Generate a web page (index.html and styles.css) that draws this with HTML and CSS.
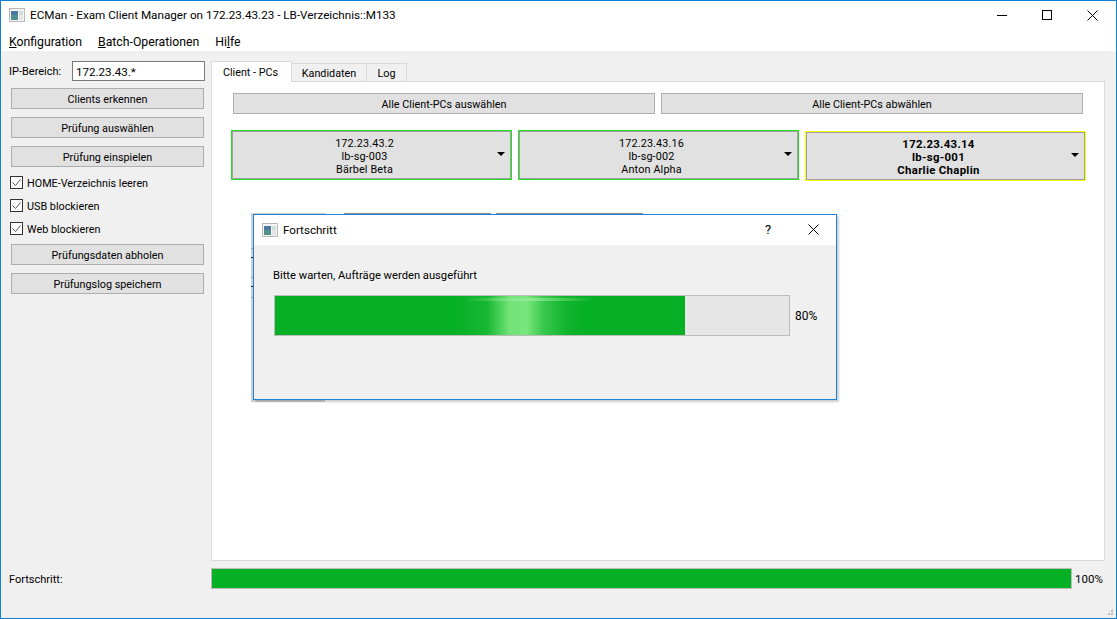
FILE: index.html
```html
<!DOCTYPE html>
<html>
<head>
    <meta charset="utf-8">
    <title>ECMan - Exam Client Manager</title>
    <link rel="stylesheet" href="styles.css">
</head>

<body>
<div class="window">
    <div class="titlebar">
        <svg class="app-icon" width="16" height="14" viewBox="0 0 16 14">
            <rect x="0.5" y="0.5" width="15" height="13" fill="#f4f4f4" stroke="#b9b9b9"/>
            <rect x="2" y="3" width="7" height="9" fill="#4f8f8c"/>
            <rect x="2" y="3" width="7" height="4" fill="#4a78a0"/>
            <rect x="10" y="3" width="4" height="4" fill="#cfe0d6"/>
            <rect x="10" y="7" width="4" height="5" fill="#e4e4e4"/>
        </svg>
        <span class="title-text">ECMan - Exam Client Manager on 172.23.43.23 - LB-Verzeichnis::M133</span>
        <div class="window-buttons">
            <svg width="11" height="11" viewBox="0 0 11 11"><path d="M0 5.5h10" stroke="#000" fill="none"/></svg>
            <svg width="11" height="11" viewBox="0 0 11 11"><rect x="0.5" y="0.5" width="9" height="9" stroke="#000" fill="none"/></svg>
            <svg width="11" height="11" viewBox="0 0 11 11"><path d="M0.5 0.5l10 10M10.5 0.5l-10 10" stroke="#000" fill="none"/></svg>
        </div>
    </div>

    <div class="menubar">
        <span><u>K</u>onfiguration</span>
        <span><u>B</u>atch-Operationen</span>
        <span>Hi<u>l</u>fe</span>
    </div>

    <div class="main">
        <div class="sidebar">
            <div class="ip-row">
                <label>IP-Bereich:</label>
                <div class="ip-input">172.23.43.*</div>
            </div>
            <button class="btn side-btn">Clients erkennen</button>
            <button class="btn side-btn">Prüfung auswählen</button>
            <button class="btn side-btn">Prüfung einspielen</button>
            <div class="checks">
                <div class="check">
                    <svg width="13" height="13" viewBox="0 0 13 13"><rect x="0.5" y="0.5" width="12" height="12" fill="#fff" stroke="#333"/><path d="M2.5 6.5l3 3 5-6" stroke="#555" fill="none"/></svg>
                    HOME-Verzeichnis leeren
                </div>
                <div class="check">
                    <svg width="13" height="13" viewBox="0 0 13 13"><rect x="0.5" y="0.5" width="12" height="12" fill="#fff" stroke="#333"/><path d="M2.5 6.5l3 3 5-6" stroke="#555" fill="none"/></svg>
                    USB blockieren
                </div>
                <div class="check">
                    <svg width="13" height="13" viewBox="0 0 13 13"><rect x="0.5" y="0.5" width="12" height="12" fill="#fff" stroke="#333"/><path d="M2.5 6.5l3 3 5-6" stroke="#555" fill="none"/></svg>
                    Web blockieren
                </div>
            </div>
            <button class="btn side-btn">Prüfungsdaten abholen</button>
            <button class="btn side-btn">Prüfungslog speichern</button>
        </div>

        <div class="tabs">
            <div class="tab-bar">
                <div class="tab active">Client - PCs</div>
                <div class="tab tab-kand">Kandidaten</div>
                <div class="tab tab-log">Log</div>
            </div>
            <div class="tab-pane">
                <div class="select-row">
                    <button class="btn">Alle Client-PCs auswählen</button>
                    <button class="btn">Alle Client-PCs abwählen</button>
                </div>
                <div class="client-row">
                    <div class="client online">
                        <div>172.23.43.2<br>lb-sg-003<br>Bärbel Beta</div>
                        <i class="arrow"></i>
                    </div>
                    <div class="client online">
                        <div>172.23.43.16<br>lb-sg-002<br>Anton Alpha</div>
                        <i class="arrow"></i>
                    </div>
                    <div class="client busy">
                        <div>172.23.43.14<br>lb-sg-001<br>Charlie Chaplin</div>
                        <i class="arrow"></i>
                    </div>
                </div>
            </div>
        </div>
    </div>

    <div class="statusrow">
        <span class="status-label">Fortschritt:</span>
        <div class="bar status-bar"><div class="bar-fill full"></div></div>
        <span class="status-pct">100%</span>
    </div>
    <div class="grip"></div>

    <!-- stuff behind the dialog that peeks out around its edges -->
    <div class="peek peek-a"></div>
    <div class="peek peek-b"></div>
    <div class="peek-table"></div>

    <div class="dialog">
        <div class="dialog-title">
            <svg class="dialog-icon" width="16" height="14" viewBox="0 0 16 14">
                <rect x="0.5" y="0.5" width="15" height="13" fill="#f4f4f4" stroke="#b9b9b9"/>
                <rect x="2" y="3" width="7" height="9" fill="#4f8f8c"/>
                <rect x="2" y="3" width="7" height="4" fill="#4a78a0"/>
                <rect x="10" y="3" width="4" height="4" fill="#cfe0d6"/>
                <rect x="10" y="7" width="4" height="5" fill="#e4e4e4"/>
            </svg>
            <span>Fortschritt</span>
            <span class="dialog-help">?</span>
            <svg class="dialog-close" width="11" height="11" viewBox="0 0 11 11"><path d="M0.5 0.5l10 10M10.5 0.5l-10 10" stroke="#000" fill="none"/></svg>
        </div>
        <div class="dialog-body">
            <div class="dialog-msg">Bitte warten, Aufträge werden ausgeführt</div>
            <div class="dialog-progress">
                <div class="bar dialog-bar">
                    <div class="bar-fill" style="width: 79.8%">
                        <div class="shine"></div>
                        <div class="shine-top"></div>
                    </div>
                </div>
                <span class="dialog-pct">80%</span>
            </div>
        </div>
    </div>
</div>
</body>
</html>
```

FILE: styles.css
```css
html, body {
    margin: 0;
    padding: 0;
    overflow: hidden;
}

body {
    font-family: Roboto, "Open Sans", sans-serif;
    font-size: 10.8px;
    color: #000;
}

.window {
    position: relative;
    box-sizing: border-box;
    width: 1117px;
    height: 619px;
    border: 1px solid #0f7fd8;
    background: #f0f0f0;
    display: flex;
    flex-direction: column;
}

/* title + menu */
.titlebar {
    height: 29px;
    background: #fff;
    display: flex;
    align-items: center;
    padding-left: 8px;
    padding-bottom: 1px;
    box-sizing: border-box;
}
.app-icon {
    margin-right: 5px;
}
.title-text {
    flex: 1;
    font-size: 11.7px;
}
.window-buttons {
    display: flex;
    gap: 34px;
    padding-right: 18px;
}
.menubar {
    height: 21px;
    background: #fff;
    display: flex;
    gap: 16px;
    padding-left: 8px;
    font-size: 12.25px;
    line-height: 24px;
}

/* main area */
.main {
    flex: 1;
    display: flex;
    min-height: 0;
}
.sidebar {
    width: 210px;
    flex: none;
    box-sizing: border-box;
    padding: 10px 0 0 10px;
    display: flex;
    flex-direction: column;
}
.ip-row {
    display: flex;
    margin-left: -2px;
    height: 20px;
    margin-bottom: 7px;
    font-size: 11px;
    line-height: 22px;
}
.ip-row label {
    width: 63px;
}
.ip-input {
    box-sizing: border-box;
    width: 133px;
    height: 20px;
    border: 1px solid #7a7a7a;
    background: #fff;
    padding-left: 3px;
    line-height: 20px;
    font-size: 11.6px;
}
.btn {
    box-sizing: border-box;
    height: 21px;
    border: 1px solid #adadad;
    background: #e1e1e1;
    font-family: inherit;
    font-size: 10.8px;
    color: #000;
    padding: 2px 0 0;
}
.side-btn {
    width: 193px;
    margin-bottom: 8px;
}
.checks {
    margin-left: -1px;
    margin-top: -2px;
    margin-bottom: 7px;
    display: flex;
    flex-direction: column;
    gap: 5px;
}
.check {
    height: 18px;
    box-sizing: border-box;
    padding-top: 2px;
    display: flex;
    align-items: center;
    gap: 4px;
}
.check svg {
    margin-top: -2px;
}

/* tabs */
.tabs {
    flex: 1;
    display: flex;
    flex-direction: column;
    margin-right: 11px;
    padding-top: 10px;
}
.tab-bar {
    display: flex;
    align-items: flex-end;
    height: 20px;
}
.tab {
    box-sizing: border-box;
    height: 18px;
    border: 1px solid #d9d9d9;
    border-left: 0;
    border-bottom: 0;
    text-align: center;
    line-height: 19px;
}
.tab.active {
    width: 81px;
    height: 21px;
    margin-bottom: -1px;
    padding-right: 2px;
    background: #fff;
    border-left: 1px solid #d9d9d9;
    line-height: 22px;
    position: relative;
}
.tab-kand {
    width: 75px;
}
.tab-log {
    width: 40px;
}
.tab-pane {
    flex: 1;
    background: #fff;
    border: 1px solid #d9d9d9;
    padding: 11px 21px 0 19px;
}
.select-row {
    display: flex;
    gap: 6px;
    padding-left: 2px;
}
.select-row .btn {
    flex: 1;
}
.client-row {
    display: flex;
    align-items: flex-start;
    gap: 6px;
    margin-top: 16px;
    margin-right: -4px;
}
.client {
    box-sizing: border-box;
    position: relative;
    flex: none;
    width: 281px;
    height: 50px;
    background: #e1e1e1;
    text-align: center;
    padding: 6px 14px 0 0;
    line-height: 13px;
    letter-spacing: 0.15px;
}
.client.online {
    border: 1px solid #22e022;
    box-shadow: inset 0 0 0 1px #a0a0a0;
}
.client.busy {
    margin-top: 1px;
    border: 1px solid #ffff00;
    box-shadow: inset 0 0 0 1px #a0a0a0;
    font-weight: bold;
    font-size: 11.4px;
    letter-spacing: 0.3px;
}
.arrow {
    position: absolute;
    right: 6px;
    top: 21px;
    border: 4px solid transparent;
    border-top: 4px solid #000;
    border-bottom: 0;
}

/* bottom row */
.statusrow {
    height: 57px;
    display: flex;
    align-items: flex-start;
    padding: 7px 0 0 8px;
    box-sizing: border-box;
    font-size: 11px;
}
.status-label {
    width: 202px;
    line-height: 23px;
}
.bar {
    box-sizing: border-box;
    border: 1px solid #bcbcbc;
    background: #e6e6e6;
}
.status-bar {
    width: 861px;
    height: 21px;
}
.status-pct {
    margin-left: 3px;
    line-height: 23px;
    font-size: 11.5px;
}
.bar-fill {
    position: relative;
    height: 100%;
    background: #06b025;
    overflow: hidden;
}
.bar-fill.full {
    width: 100%;
}
.grip {
    position: absolute;
    right: 2px;
    bottom: 2px;
    width: 9px;
    height: 9px;
    background:
        radial-gradient(circle at 1px 1px, #bcbcbc 1px, transparent 1px) 0 0 / 3px 3px;
    clip-path: polygon(100% 0, 100% 100%, 0 100%);
}

/* things behind the dialog */
.peek {
    position: absolute;
    top: 212px;
    width: 147px;
    height: 1px;
    background: #8a8a8a;
}
.peek-a {
    left: 343px;
}
.peek-b {
    left: 495px;
}
.peek-table {
    position: absolute;
    left: 250px;
    top: 212px;
    width: 74px;
    height: 189px;
    background:
        linear-gradient(#a0a0a0, #a0a0a0) 0 35px / 100% 1px no-repeat,
        linear-gradient(#222, #222) 0 44px / 100% 1px no-repeat,
        linear-gradient(#a0a0a0, #a0a0a0) 0 64px / 100% 1px no-repeat,
        linear-gradient(#222, #222) 0 73px / 100% 1px no-repeat,
        linear-gradient(#a0a0a0, #a0a0a0) 0 84px / 100% 1px no-repeat,
        #cfcfcf;
}

/* progress dialog */
.dialog {
    position: absolute;
    left: 252px;
    top: 213px;
    box-sizing: border-box;
    width: 584px;
    height: 186px;
    border: 1px solid #1883d7;
    background: #f0f0f0;
    box-shadow: 2px 2px 2px rgba(0, 0, 0, 0.2);
    display: flex;
    flex-direction: column;
}
.dialog-title {
    height: 30px;
    padding-bottom: 1px;
    box-sizing: border-box;
    background: #fff;
    display: flex;
    align-items: center;
    padding-left: 8px;
    position: relative;
    font-size: 11.6px;
}
.dialog-icon {
    margin-right: 5px;
}
.dialog-help {
    position: absolute;
    left: 511px;
    font-size: 13px;
}
.dialog-close {
    position: absolute;
    left: 554px;
}
.dialog-body {
    flex: 1;
    padding: 24px 0 0 19px;
}
.dialog-msg {
    line-height: 14px;
    margin-bottom: 12px;
    font-size: 11.2px;
}
.dialog-progress {
    display: flex;
    align-items: center;
    gap: 5px;
    margin-left: 1px;
}
.dialog-pct {
    font-size: 12px;
}
.dialog-bar {
    width: 516px;
    height: 41px;
}
.shine {
    position: absolute;
    left: 180px;
    top: 0;
    bottom: 0;
    width: 130px;
    background: linear-gradient(90deg, rgba(120,230,125,0) 0%, rgba(120,230,125,0.15) 25%, rgba(120,230,125,0.95) 42%, rgba(120,230,125,1) 55%, rgba(120,230,125,0.45) 68%, rgba(120,230,125,0.1) 85%, rgba(120,230,125,0) 100%);
}
.shine-top {
    position: absolute;
    left: 190px;
    top: 2px;
    width: 130px;
    height: 3px;
    background: linear-gradient(90deg, rgba(150,235,150,0), rgba(150,235,150,0.8) 50%, rgba(150,235,150,0));
}
```
